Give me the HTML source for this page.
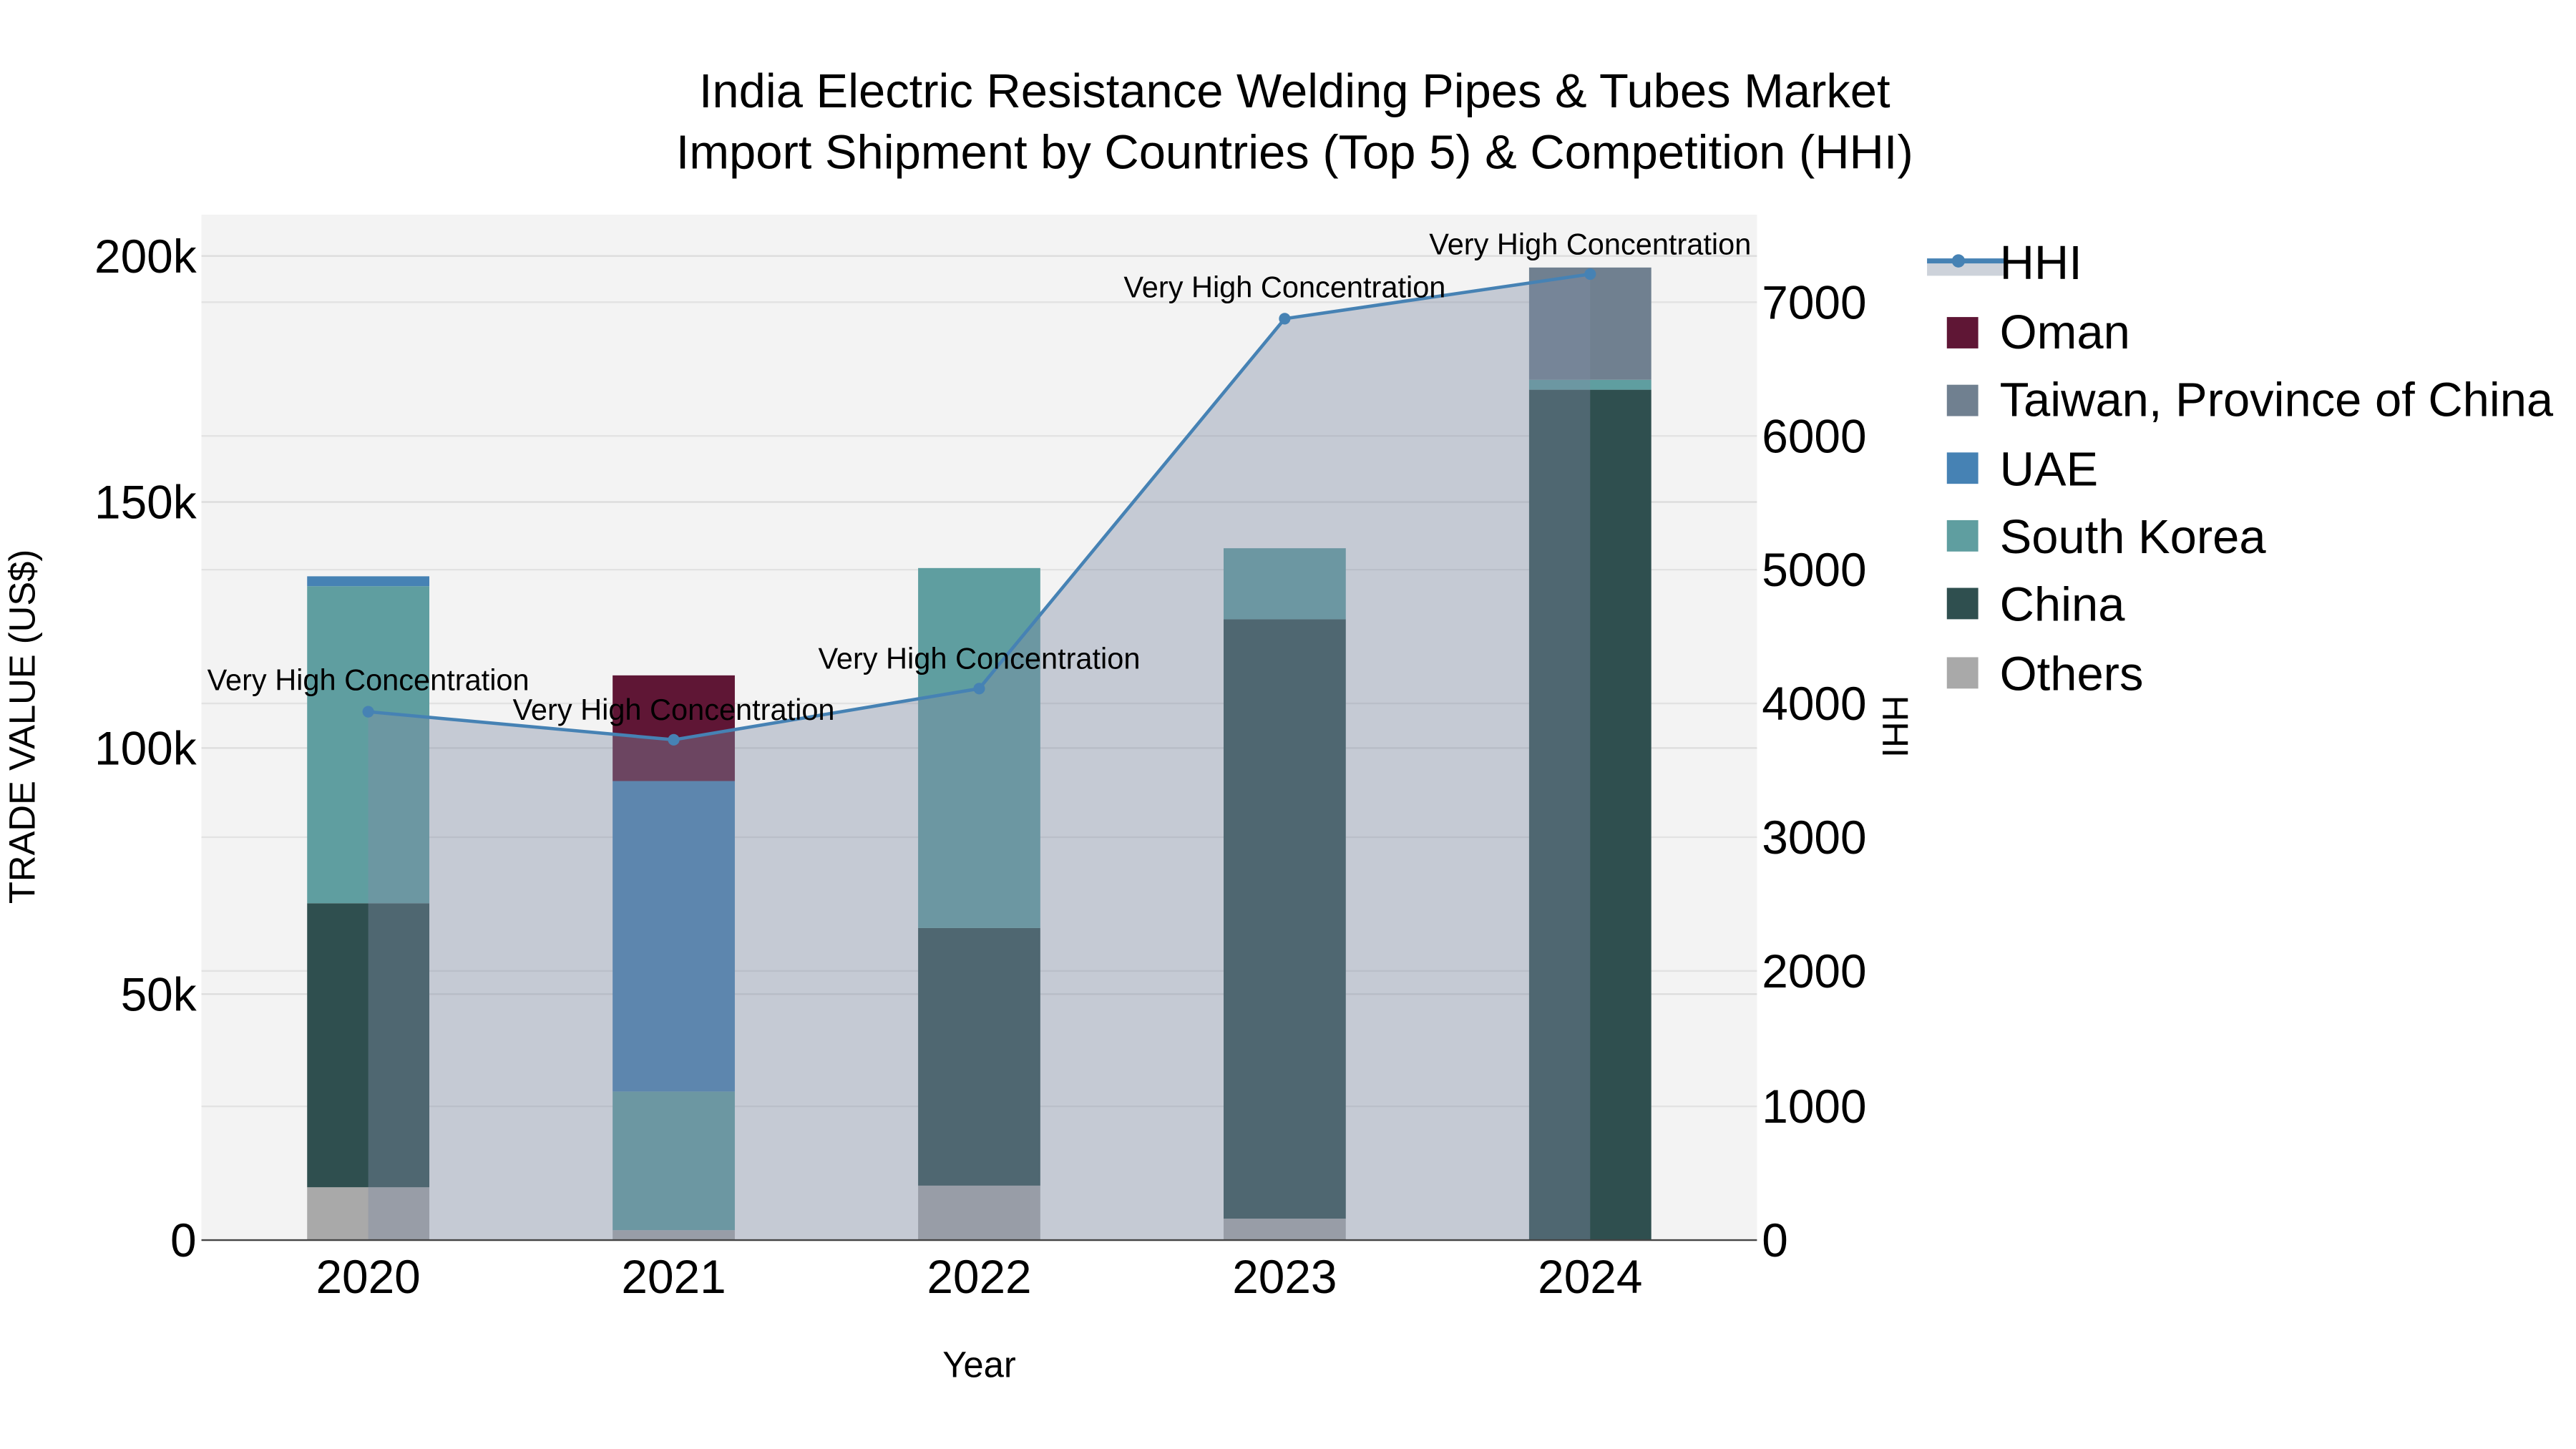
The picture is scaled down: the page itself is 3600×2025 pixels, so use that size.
<!DOCTYPE html>
<html><head><meta charset="utf-8"><style>
html,body{margin:0;padding:0;background:#fff;}
svg{display:block;}
text{font-family:"Liberation Sans",sans-serif;fill:#000;}
</style></head><body>
<svg width="3600" height="2025" viewBox="0 0 1560 877.5" xmlns="http://www.w3.org/2000/svg">
<rect x="0" y="0" width="1560" height="877.5" fill="#fff"/>
<rect x="122" y="130" width="942" height="621" fill="#f3f3f3"/>
<g stroke="#e2e2e2" stroke-width="1">
<line x1="122" x2="1064" y1="670" y2="670"/><line x1="122" x2="1064" y1="588" y2="588"/>
<line x1="122" x2="1064" y1="507" y2="507"/><line x1="122" x2="1064" y1="426" y2="426"/>
<line x1="122" x2="1064" y1="345" y2="345"/><line x1="122" x2="1064" y1="264" y2="264"/>
<line x1="122" x2="1064" y1="183" y2="183"/>
</g>
<g stroke="#dcdcdc" stroke-width="1">
<line x1="122" x2="1064" y1="602" y2="602"/><line x1="122" x2="1064" y1="453" y2="453"/>
<line x1="122" x2="1064" y1="304" y2="304"/><line x1="122" x2="1064" y1="155" y2="155"/>
</g>
<g>
<rect x="186" y="719" width="74" height="32" fill="#a9a9a9"/>
<rect x="186" y="547" width="74" height="172" fill="#2f4f4f"/>
<rect x="186" y="355" width="74" height="192" fill="#5f9ea0"/>
<rect x="186" y="349" width="74" height="6" fill="#4682b4"/>

<rect x="371" y="745" width="74" height="6" fill="#a9a9a9"/>
<rect x="371" y="661" width="74" height="84" fill="#5f9ea0"/>
<rect x="371" y="473" width="74" height="188" fill="#4682b4"/>
<rect x="371" y="409" width="74" height="64" fill="#5f1635"/>

<rect x="556" y="718" width="74" height="33" fill="#a9a9a9"/>
<rect x="556" y="562" width="74" height="156" fill="#2f4f4f"/>
<rect x="556" y="344" width="74" height="218" fill="#5f9ea0"/>

<rect x="741" y="738" width="74" height="13" fill="#a9a9a9"/>
<rect x="741" y="375" width="74" height="363" fill="#2f4f4f"/>
<rect x="741" y="332" width="74" height="43" fill="#5f9ea0"/>

<rect x="926" y="236" width="74" height="515" fill="#2f4f4f"/>
<rect x="926" y="230" width="74" height="6" fill="#5f9ea0"/>
<rect x="926" y="162" width="74" height="68" fill="#708090"/>
</g>
<path d="M223,751 L223,431 L408,448 L593,417 L778,193 L963,166 L963,751 Z" fill="rgb(128,140,165)" fill-opacity="0.4"/>
<polyline points="223,431 408,448 593,417 778,193 963,166" fill="none" stroke="#4682b4" stroke-width="2"/>
<g fill="#4682b4"><circle cx="223" cy="431" r="3.5"/><circle cx="408" cy="448" r="3.5"/><circle cx="593" cy="417" r="3.5"/><circle cx="778" cy="193" r="3.5"/><circle cx="963" cy="166" r="3.5"/></g>
<line x1="122" x2="1064" y1="751" y2="751" stroke="#444" stroke-width="1"/>
<g font-size="18" text-anchor="middle">
<text x="223" y="418">Very High Concentration</text>
<text x="408" y="436">Very High Concentration</text>
<text x="593" y="405">Very High Concentration</text>
<text x="778" y="180">Very High Concentration</text>
<text x="963" y="154">Very High Concentration</text>
</g>
<g font-size="29" text-anchor="middle" fill="#222">
<text x="784" y="65">India Electric Resistance Welding Pipes &amp; Tubes Market</text>
<text x="784" y="102">Import Shipment by Countries (Top 5) &amp; Competition (HHI)</text>
</g>
<g font-size="28.5" text-anchor="end">
<text x="119" y="761">0</text><text x="119" y="612">50k</text><text x="119" y="463">100k</text>
<text x="119" y="314">150k</text><text x="119" y="165">200k</text>
</g>
<g font-size="28.5" text-anchor="start">
<text x="1067" y="761">0</text><text x="1067" y="680">1000</text><text x="1067" y="598">2000</text>
<text x="1067" y="517">3000</text><text x="1067" y="436">4000</text><text x="1067" y="355">5000</text>
<text x="1067" y="274">6000</text><text x="1067" y="193">7000</text>
</g>
<g font-size="28.5" text-anchor="middle">
<text x="223" y="783">2020</text><text x="408" y="783">2021</text><text x="593" y="783">2022</text>
<text x="778" y="783">2023</text><text x="963" y="783">2024</text>
</g>
<text x="593" y="834" font-size="22" text-anchor="middle">Year</text>
<text transform="translate(21,440) rotate(-90)" font-size="22" text-anchor="middle">TRADE VALUE (US$)</text>
<text transform="translate(1140,440) rotate(90)" font-size="22" text-anchor="middle">HHI</text>
<rect x="1167" y="158" width="47" height="9" fill="rgb(205,210,218)"/>
<line x1="1167" x2="1214" y1="158" y2="158" stroke="#4682b4" stroke-width="3"/>
<circle cx="1186" cy="158" r="4" fill="#4682b4"/>
<rect x="1179" y="192" width="19" height="19" fill="#5f1635"/>
<rect x="1179" y="233" width="19" height="19" fill="#708090"/>
<rect x="1179" y="274" width="19" height="19" fill="#4682b4"/>
<rect x="1179" y="315" width="19" height="19" fill="#5f9ea0"/>
<rect x="1179" y="356" width="19" height="19" fill="#2f4f4f"/>
<rect x="1179" y="398" width="19" height="19" fill="#a9a9a9"/>
<g font-size="29">
<text x="1211" y="169">HHI</text>
<text x="1211" y="211">Oman</text>
<text x="1211" y="252">Taiwan, Province of China</text>
<text x="1211" y="294">UAE</text>
<text x="1211" y="335">South Korea</text>
<text x="1211" y="376">China</text>
<text x="1211" y="418">Others</text>
</g>
</svg>
</body></html>
